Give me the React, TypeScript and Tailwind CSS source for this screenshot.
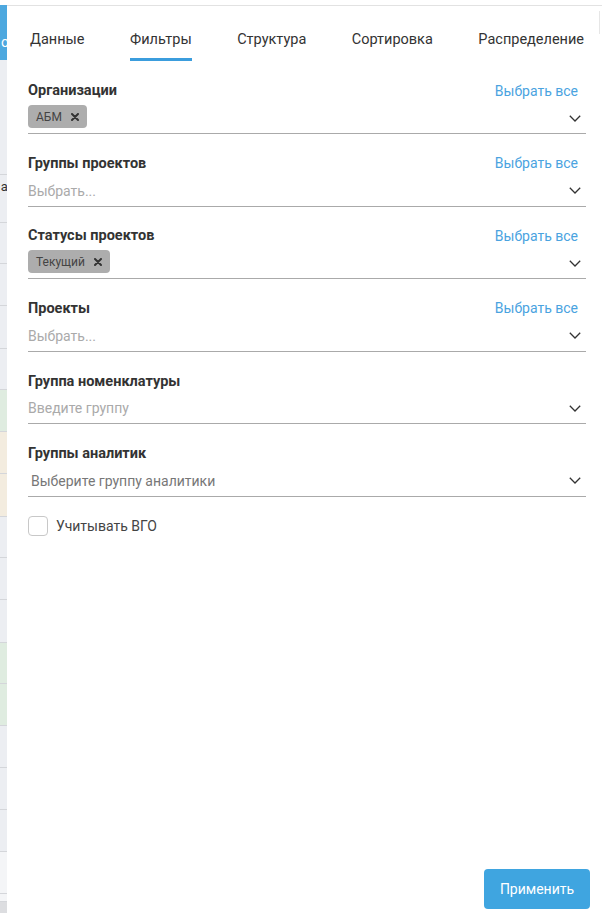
import { useState } from 'react';

const tabs = ['Данные', 'Фильтры', 'Структура', 'Сортировка', 'Распределение'];

type Filter = {
  label: string;
  selectAll?: boolean;
  tag?: string;
  placeholder?: string;
  darker?: boolean;
};

const filters: Filter[] = [
  { label: 'Организации', selectAll: true, tag: 'АБМ' },
  { label: 'Группы проектов', selectAll: true, placeholder: 'Выбрать...' },
  { label: 'Статусы проектов', selectAll: true, tag: 'Текущий' },
  { label: 'Проекты', selectAll: true, placeholder: 'Выбрать...' },
  { label: 'Группа номенклатуры', placeholder: 'Введите группу' },
  { label: 'Группы аналитик', placeholder: 'Выберите группу аналитики', darker: true },
];

// rows of the table that peeks out behind the drawer
const rows = [
  'bg-[#eceef2] h-[48px]',
  'bg-[#eceef2] h-[41px]',
  'bg-[#eceef2] h-[42px]',
  'bg-[#eceef2] h-[43px]',
  'bg-[#eceef2] h-[41px]',
  'bg-[#dfece0] h-[42px]',
  'bg-[#f3ecdf] h-[42px]',
  'bg-[#f3ecdf] h-[43px]',
  'bg-[#eceef2] h-[41px]',
  'bg-[#eceef2] h-[42px]',
  'bg-[#eceef2] h-[43px]',
  'bg-[#dfece0] h-[41px]',
  'bg-[#dfece0] h-[42px]',
  'bg-[#eceef2] h-[42px]',
  'bg-[#eceef2] h-[42px]',
  'bg-[#eceef2] h-[42px]',
  'bg-[#f4f5f7] h-[42px]',
  'bg-[#f4f5f7] h-[8px]',
];

function Chevron() {
  return (
    <svg width="12" height="7" viewBox="0 0 12 7" fill="none" className="shrink-0">
      <polyline points="0.8,0.8 6,6 11.2,0.8" stroke="#333" strokeWidth="1.3" />
    </svg>
  );
}

function CloseMark() {
  return (
    <svg width="8" height="8" viewBox="0 0 8 8" className="shrink-0">
      <path d="M1 1 L7 7 M7 1 L1 7" stroke="#333" strokeWidth="2" strokeLinecap="round" />
    </svg>
  );
}

export default function App() {
  const [active, setActive] = useState(1);
  const [vgo, setVgo] = useState(false);

  return (
    <div
      className="w-[602px] h-[918px] bg-white flex flex-col overflow-hidden"
      style={{ fontFamily: 'Roboto, "Liberation Sans", sans-serif' }}
    >
      <div className="h-[5px] shrink-0" />
      <div className="flex flex-1 min-h-0">
        {/* table behind the drawer */}
        <div className="w-[7px] shrink-0 overflow-hidden flex flex-col">
          <div className="h-[55px] bg-[#4da8df] flex items-center justify-end shrink-0">
            <span className="text-[14px] text-white mr-[-2px] mt-[20px]">о</span>
          </div>
          <div className="h-[115px] bg-[#eceef2] border-b border-[#d4d6da] shrink-0" />
          {rows.map((r, i) => (
            <div key={i} className={`${r} border-b border-[#d4d6da] shrink-0 flex items-start justify-end`}>
              {i === 0 && <span className="text-[13px] text-[#333] mr-[-4px] mt-[2px]">а:</span>}
            </div>
          ))}
          <div className="h-[11px] bg-[#dcdde0] shrink-0" />
        </div>

        {/* drawer */}
        <div className="flex-1 border-t border-[#e2e2e2] flex flex-col relative">
          <div className="absolute right-[2px] top-[5px] h-[23px] w-px bg-[#e6e6e6]" />
          <div className="flex pl-[23px] pt-[21px]">
            {tabs.map((t, i) => (
              <button
                key={t}
                onClick={() => setActive(i)}
                className={`mr-[45.5px] last:mr-0 h-[34px] pb-[5px] text-[14.5px] text-[#333] border-b-[3px] ${i === active ? 'border-[#3b9ddd]' : 'border-transparent'}`}
              >
                {t}
              </button>
            ))}
          </div>

          <div className="flex flex-col pl-[21px] pr-[16px] pt-[18px] gap-[17.6px]">
            {filters.map((f) => (
              <div key={f.label} className="flex flex-col border-b border-[#aaaaaa] h-[55px]">
                <div className="flex items-center justify-between h-[24px]">
                  <span className="text-[14.5px] font-bold text-[#333]">{f.label}</span>
                  {f.selectAll && (
                    <span className="text-[14px] text-[#4aa3df] mr-[8px]">Выбрать все</span>
                  )}
                </div>
                <div className="flex items-center justify-between flex-1 pr-[5px]">
                  {f.tag ? (
                    <span className="flex items-center gap-[9px] h-[23px] px-[8px] rounded-[4px] bg-[#adadad] text-[12px] text-[#444] mt-[-3px]">
                      {f.tag}
                      <CloseMark />
                    </span>
                  ) : (
                    <span
                      className={`text-[14px] pt-[1px] ${f.darker ? 'text-[#777] pl-[3px]' : 'text-[#aaa]'}`}
                    >
                      {f.placeholder}
                    </span>
                  )}
                  <Chevron />
                </div>
              </div>
            ))}

            <label className="flex items-center gap-[8px] mt-[1px] cursor-pointer">
              <input
                type="checkbox"
                checked={vgo}
                onChange={() => setVgo(!vgo)}
                className="appearance-none w-[20px] h-[20px] rounded-[4px] border border-[#c8c8c8] bg-white"
              />
              <span className="text-[14px] text-[#444]">Учитывать ВГО</span>
            </label>
          </div>

          <div className="flex-1" />
          <div className="flex justify-end pr-[12px] pb-[9px]">
            <button className="w-[106px] h-[40px] rounded-[4px] bg-[#3fa5e0] text-white text-[14px]">
              Применить
            </button>
          </div>
        </div>
      </div>
    </div>
  );
}
